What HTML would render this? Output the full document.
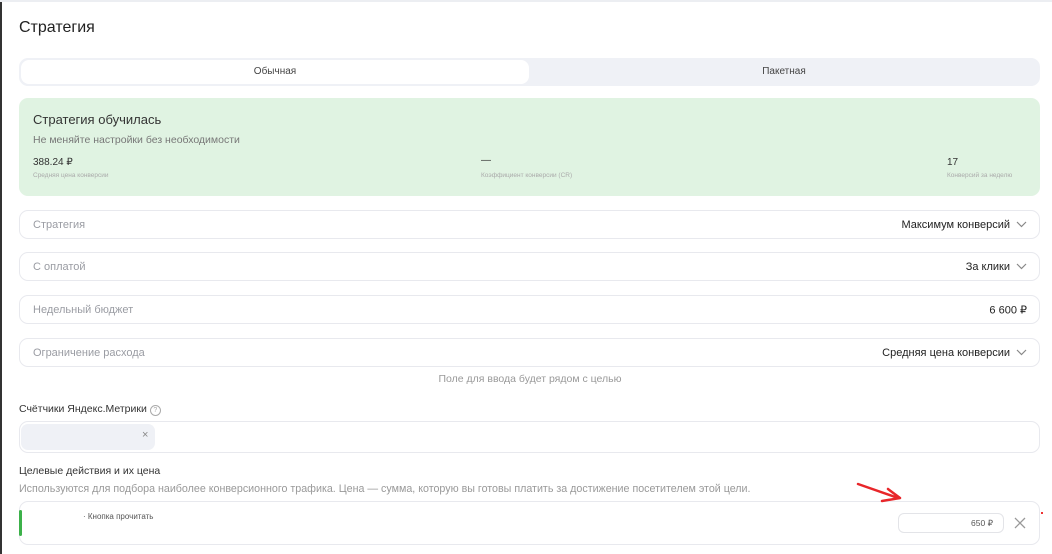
<!DOCTYPE html><html><head><meta charset="utf-8"><style>
body{margin:0;width:1052px;height:554px;overflow:hidden;background:#fff;font-family:"Liberation Sans",sans-serif;position:relative;color:#222}
.a{position:absolute}
.f{position:absolute;left:19px;width:1021px;border:1px solid #e8e9ee;border-radius:9px;background:#fff;box-sizing:border-box;font-size:11px}
.f .l{position:absolute;left:13px;top:50%;transform:translateY(-50%);color:#9a9ca3}
.f .r{position:absolute;right:12px;top:50%;transform:translateY(-50%);color:#222;display:flex;align-items:center;gap:6px}
</style></head><body>
<div class="a" style="left:0;top:0;width:2px;height:554px;background:#333"></div>
<div class="a" style="left:0;top:0;width:1052px;height:2px;background:#eceef2"></div>
<div class="a" style="left:19px;top:19px;font-size:16px;color:#222">Стратегия</div>
<div class="a" style="left:19px;top:58px;width:1021px;height:28px;background:#eff1f6;border-radius:9px"></div>
<div class="a" style="left:21px;top:60px;width:508px;height:24px;background:#fff;border-radius:8px;font-size:10px;text-align:center;line-height:24px;color:#444">Обычная</div>
<div class="a" style="left:530px;top:60px;width:508px;height:24px;font-size:10px;text-align:center;line-height:24px;color:#444">Пакетная</div>
<div class="a" style="left:19px;top:98px;width:1021px;height:98px;background:#e0f3e2;border-radius:9px"></div>
<div class="a" style="left:33px;top:112px;font-size:13px;color:#333">Стратегия обучилась</div>
<div class="a" style="left:33px;top:134px;font-size:10.5px;color:#777">Не меняйте настройки без необходимости</div>
<div class="a" style="left:33px;top:157px;font-size:10px;color:#333">388.24 ₽</div>
<div class="a" style="left:33px;top:172px;font-size:6.5px;color:#aaa">Средняя цена конверсии</div>
<div class="a" style="left:481px;top:155px;font-size:10px;color:#333">—</div>
<div class="a" style="left:481px;top:172px;font-size:6.5px;color:#aaa">Коэффициент конверсии (CR)</div>
<div class="a" style="left:947px;top:157px;font-size:10px;color:#333">17</div>
<div class="a" style="left:947px;top:172px;font-size:6.5px;color:#aaa">Конверсий за неделю</div>
<div class="f" style="top:210px;height:29px"><span class="l">Стратегия</span><span class="r">Максимум конверсий <svg width="11" height="7"><path d="M1 1l4.5 4.5L10 1" fill="none" stroke="#888" stroke-width="1.2"/></svg></span></div>
<div class="f" style="top:252px;height:29px"><span class="l">С оплатой</span><span class="r">За клики <svg width="11" height="7"><path d="M1 1l4.5 4.5L10 1" fill="none" stroke="#888" stroke-width="1.2"/></svg></span></div>
<div class="f" style="top:295px;height:29px"><span class="l">Недельный бюджет</span><span class="r">6 600 ₽</span></div>
<div class="f" style="top:338px;height:29px"><span class="l">Ограничение расхода</span><span class="r">Средняя цена конверсии <svg width="11" height="7"><path d="M1 1l4.5 4.5L10 1" fill="none" stroke="#888" stroke-width="1.2"/></svg></span></div>
<div class="a" style="left:0;width:1060px;top:373px;text-align:center;font-size:10.5px;color:#999">Поле для ввода будет рядом с целью</div>
<div class="a" style="left:19px;top:403px;font-size:10.5px;color:#333">Счётчики Яндекс.Метрики <span style="display:inline-block;width:9px;height:9px;border:1px solid #aaa;border-radius:50%;font-size:7px;line-height:9px;text-align:center;color:#aaa">?</span></div>
<div class="f" style="top:421px;height:32px"></div>
<div class="a" style="left:21px;top:424px;width:134px;height:26px;background:#eff1f6;border-radius:7px"></div>
<div class="a" style="left:142px;top:429px;font-size:11px;color:#888">×</div>
<div class="a" style="left:19px;top:465px;font-size:10.5px;color:#333">Целевые действия и их цена</div>
<div class="a" style="left:19px;top:483px;font-size:10.7px;color:#999">Используются для подбора наиболее конверсионного трафика. Цена — сумма, которую вы готовы платить за достижение посетителем этой цели.</div>
<div class="f" style="top:501px;height:44px"></div>
<div class="a" style="left:19px;top:510px;width:3px;height:26px;background:#3cb14a;border-radius:2px"></div>
<div class="a" style="left:83px;top:512px;font-size:8px;color:#555">· Кнопка прочитать</div>
<div class="a" style="left:898px;top:513px;width:106px;height:20px;border:1px solid #e3e4e8;border-radius:6px;box-sizing:border-box;font-size:8.5px;color:#555;text-align:right;padding-right:10px;line-height:19px">650 ₽</div>
<svg class="a" style="left:1014px;top:517px" width="12" height="12"><path d="M1 1l10 10M11 1L1 11" stroke="#999" stroke-width="1.3"/></svg>
<div class="a" style="left:1041px;top:512px;width:2px;height:2px;background:#e33"></div>
<svg class="a" style="left:855px;top:480px" width="50" height="26"><path d="M3 4l40 14M45 18l-12-9M45 18L27 21" fill="none" stroke="#e8262a" stroke-width="2.5" stroke-linecap="round"/></svg>
</body></html>
